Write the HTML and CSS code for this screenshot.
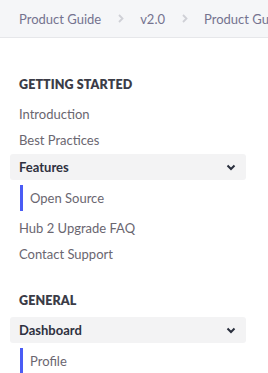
FILE: index.html
```html
<!DOCTYPE html>
<html>
<head>
<meta charset="utf-8">
<link rel="stylesheet" href="styles.css">
</head>
<body>
<header class="crumbs">
  <span class="crumb">Product Guide</span>
  <span class="sep"><svg width="6" height="9" viewBox="0 0 6 9"><path d="M1 1l3.5 3.5L1 8" fill="none" stroke="#cfd0d6" stroke-width="1.8"/></svg></span>
  <span class="crumb">v2.0</span>
  <span class="sep"><svg width="6" height="9" viewBox="0 0 6 9"><path d="M1 1l3.5 3.5L1 8" fill="none" stroke="#cfd0d6" stroke-width="1.8"/></svg></span>
  <span class="crumb">Product Guide</span>
</header>
<nav class="side">
  <div class="section">GETTING STARTED</div>
  <a class="item">Introduction</a>
  <a class="item">Best Practices</a>
  <div class="group"><span>Features</span><svg width="10" height="7" viewBox="0 0 10 7"><path d="M1.5 1.5L5 5l3.5-3.5" fill="none" stroke="#2a2f3d" stroke-width="2"/></svg></div>
  <a class="sub">Open Source</a>
  <a class="item">Hub 2 Upgrade FAQ</a>
  <a class="item">Contact Support</a>
  <div class="section gap">GENERAL</div>
  <div class="group"><span>Dashboard</span><svg width="10" height="7" viewBox="0 0 10 7"><path d="M1.5 1.5L5 5l3.5-3.5" fill="none" stroke="#2a2f3d" stroke-width="2"/></svg></div>
  <a class="sub">Profile</a>
</nav>
</body>
</html>
```
FILE: styles.css
```css
html, body { margin: 0; padding: 0; background: #fff; }
body { font-family: Lato, "Open Sans", sans-serif; font-size: 13px; overflow: hidden; width: 268px; height: 373px; }
.crumbs {
  height: 37px; background: #f5f6f8; border-bottom: 1px solid #e6e7ea;
  display: flex; align-items: center; padding-left: 19px; white-space: nowrap; overflow: hidden;
}
.crumb { color: #74738f; font-size: 13px; flex-shrink: 0; }
.sep { display: inline-flex; align-items: center; margin: 0 16px 0 17px; flex-shrink: 0; }
.side { display: flex; flex-direction: column; padding: 0 22px 0 10px; }
.section { font-weight: 800; font-size: 12.5px; color: #3b3c47; letter-spacing: 0.1px; padding-left: 9px; margin-top: 38px; height: 18px; line-height: 18px; margin-bottom: 7px; }
.section.gap { margin-top: 25px; }
.item { display: block; color: #6a6670; height: 26px; line-height: 26px; padding-left: 9px; }
.group {
  display: flex; justify-content: space-between; align-items: center;
  background: #f3f3f4; border-radius: 3px; height: 26px; padding: 0 10px 0 9px;
  font-weight: 700; color: #2f3140;
}
.item + .group { margin-top: 1px; }
.sub { display: block; margin: 5px 0 0 10px; border-left: 3px solid #4a5cf5; padding-left: 7px; height: 26px; line-height: 26px; color: #6a6670; }
.sub + .item { margin-top: 4px; }
```
